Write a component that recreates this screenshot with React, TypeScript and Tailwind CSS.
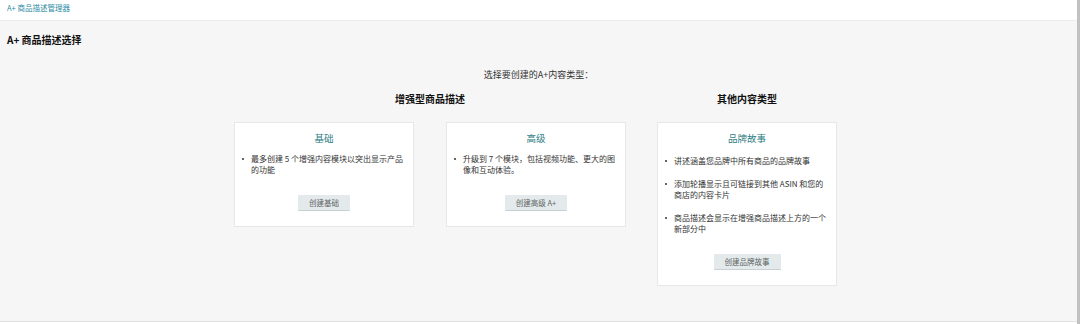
const font = { fontFamily: '"Noto Sans CJK SC", "Noto Sans", sans-serif' };

type CardProps = { title: string; items: string[]; button: string; wide?: boolean };

function TypeCard({ title, items, button, wide }: CardProps) {
  return (
    <div className="w-[180px] border border-[#e7e7e7] bg-white px-[7px] pt-[8px] pb-[15px]">
      <h3 className="text-center text-[9.5px] leading-[14px] text-[#2d7d84]">{title}</h3>
      <ul className={wide ? "mt-[10px] flex flex-col gap-[12px]" : "mt-[8px] flex flex-col gap-[12px]"}>
        {items.map((item) => (
          <li key={item} className="flex text-[8px] leading-[11px] text-[#333]">
            <span className="flex h-[11px] w-[9px] shrink-0 items-center">
              <span className="h-[2px] w-[2px] rounded-full bg-[#333]" />
            </span>
            <span>{item}</span>
          </li>
        ))}
      </ul>
      <div className="mt-[20px] flex justify-center">
        <button className="h-[16px] rounded-[1px] border-b border-[#c5d0d2] bg-[#e4eaeb] px-[11px] text-[7.5px] leading-[15px] text-[#5d6466]">
          {button}
        </button>
      </div>
    </div>
  );
}

export default function App() {
  return (
    <div style={font} className="flex h-[324px] w-[1080px] overflow-hidden bg-white">
      <div className="flex flex-1 flex-col">
        <div className="h-[21px] border-b border-[#ececec] bg-white px-[7px] pt-[3px] text-[7.5px] leading-[10px] text-[#2b8ba3]">
          A+ 商品描述管理器
        </div>
        <div className="flex-1 border-b border-[#e2e2e2] bg-[#f6f6f6] px-[7px]">
          <h1 className="mt-[12px] text-[10px] font-bold leading-[14px] text-[#111]">A+ 商品描述选择</h1>
          <p className="mt-[22px] text-center text-[9px] leading-[12px] text-[#333]">选择要创建的A+内容类型：</p>
          <div className="mt-[11px] flex items-start justify-center gap-[31px] pr-[6px]">
            <div className="flex flex-col items-center">
              <h2 className="text-[10px] font-bold leading-[14px] text-[#111]">增强型商品描述</h2>
              <div className="mt-[16px] flex items-start gap-[32px]">
                <TypeCard
                  title="基础"
                  items={["最多创建 5 个增强内容模块以突出显示产品的功能"]}
                  button="创建基础"
                />
                <TypeCard
                  title="高级"
                  items={["升级到 7 个模块，包括视频功能、更大的图像和互动体验。"]}
                  button="创建高级 A+"
                />
              </div>
            </div>
            <div className="flex flex-col items-center">
              <h2 className="text-[10px] font-bold leading-[14px] text-[#111]">其他内容类型</h2>
              <div className="mt-[16px]">
                <TypeCard
                  wide
                  title="品牌故事"
                  items={[
                    "讲述涵盖您品牌中所有商品的品牌故事",
                    "添加轮播显示且可链接到其他 ASIN 和您的商店的内容卡片",
                    "商品描述会显示在增强商品描述上方的一个新部分中",
                  ]}
                  button="创建品牌故事"
                />
              </div>
            </div>
          </div>
        </div>
        <div className="h-[2px] bg-white" />
      </div>
      <div className="w-[3px] bg-[#c1c1c1]" />
    </div>
  );
}
